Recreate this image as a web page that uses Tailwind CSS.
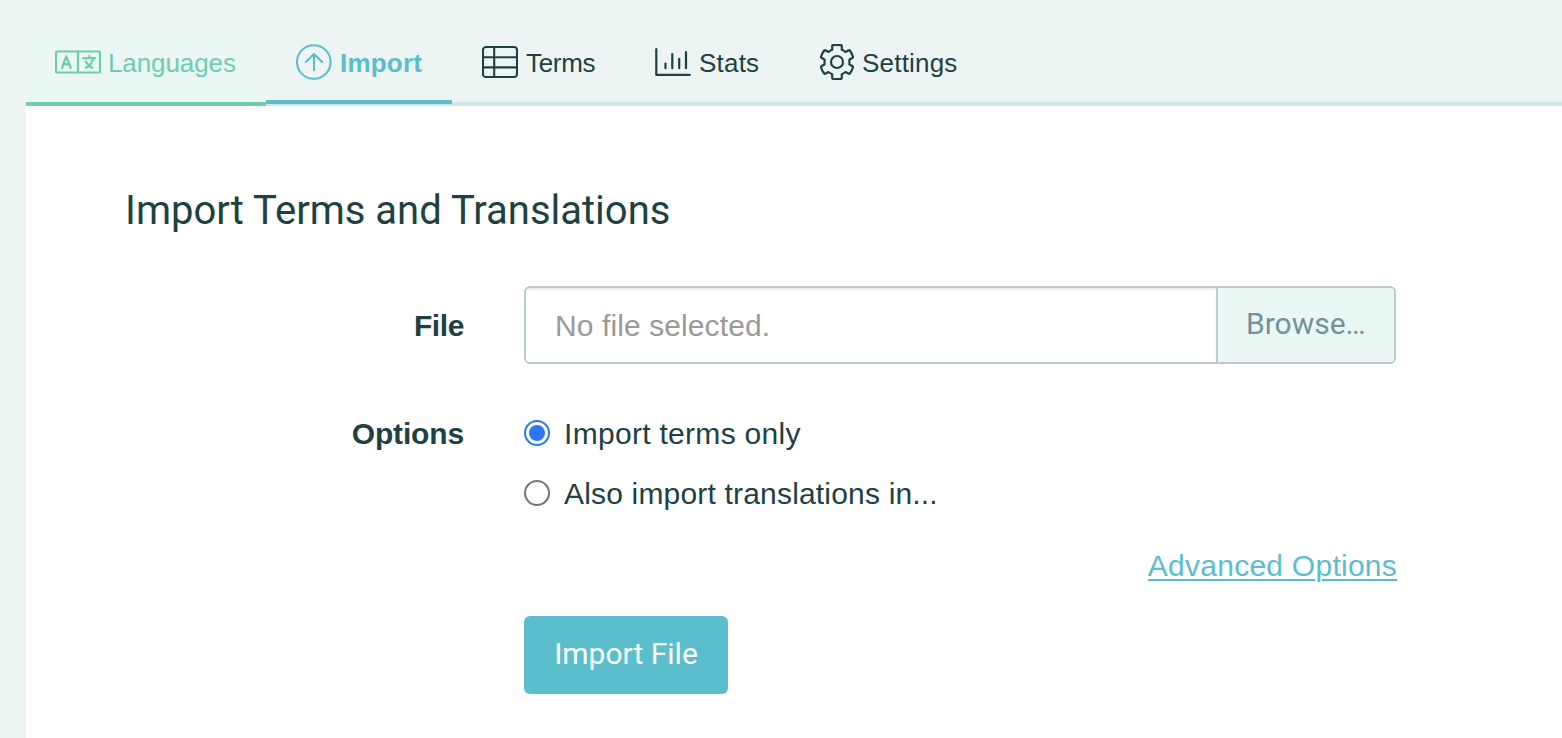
<!DOCTYPE html>
<html lang="en">
<head>
<meta charset="utf-8">
<title>Import Terms and Translations</title>
<script src="https://cdn.jsdelivr.net/npm/@tailwindcss/browser@4"></script>
</head>
<body class="h-[738px] w-[1562px] overflow-hidden bg-[#ecf5f4] pl-[26px] font-['Liberation_Sans',Arial,sans-serif] text-[30px] leading-[40px] text-[#1e4141]">
<nav class="flex h-[106px] border-b-4 border-[#d5e5e6] text-[26px] leading-[30px]">
  <a class="mt-[20px] flex h-[86px] w-[240px] shrink-0 items-center border-b-4 border-[#6dceae] bg-[#ebf7f5] pl-[29px] pt-[4px] text-[#6dceae]">
    <svg class="-mt-0.5 mr-[7px] h-[24px] w-[46px] shrink-0" viewBox="0 0 46 24" fill="none" stroke="currentColor" stroke-width="2.2" stroke-linecap="round" stroke-linejoin="round">
      <rect x="1" y="1.5" width="44" height="21" rx="0.8"/>
      <path d="M23 1.5v21M7 18 11.3 6.3 15.7 18M8.4 14.2h5.8M28.3 8.2h12M34.2 5.8v2.4M38 9c-.9 3.5-3.5 7.2-7 8.8M30.8 11.6c1.4 2.8 3.6 5 6.4 6.2"/>
    </svg>
    <span class="tracking-[-0.1px]">Languages</span>
  </a>
  <a class="flex h-[104px] w-[186px] shrink-0 items-center border-b-4 border-[#5abecd] pl-[30px] pt-[26px] font-bold text-[#5abecd]">
    <svg class="-mt-0.5 mr-[8px] h-[36px] w-[36px] shrink-0" viewBox="0 0 36 36" fill="none" stroke="currentColor" stroke-width="2.1" stroke-linecap="round" stroke-linejoin="round">
      <circle cx="17.8" cy="18" r="16.8"/>
      <path d="M18 26.2V10M9.8 18l8.2-8 8.2 8"/>
    </svg>
    <span class="tracking-[0.2px]">Import</span>
  </a>
  <a class="flex h-[104px] w-[173px] shrink-0 items-center pl-[30px] pt-[22px]">
    <svg class="-mt-0.5 mr-[8px] h-[32px] w-[36px] shrink-0" viewBox="0 0 36 32" fill="none" stroke="currentColor" stroke-width="2.1">
      <rect x="1" y="1" width="34" height="30" rx="3"/>
      <path d="M1 11.2h34M1 21.4h34M12.2 1v30"/>
    </svg>
    <span class="tracking-[-0.3px]">Terms</span>
  </a>
  <a class="flex h-[104px] w-[165px] shrink-0 items-center pl-[30px] pt-[22px]">
    <svg class="-mt-0.5 mr-[8px] h-[28px] w-[36px] shrink-0" viewBox="0 0 36 28" fill="none" stroke="currentColor" stroke-width="2.2" stroke-linecap="round" stroke-linejoin="round">
      <path d="M1.3 1.2v25.6h33.5M10.5 15.5v4.7M17.3 6v14.2M24.2 10.8v9.4M31 4v16.2"/>
    </svg>
    <span class="tracking-[0.2px]">Stats</span>
  </a>
  <a class="flex h-[104px] shrink-0 items-center pl-[30px] pt-[22px]">
    <svg class="-mt-0.5 mr-[8px] h-[36px] w-[34px] shrink-0" viewBox="0 0 34 36" fill="none" stroke="currentColor" stroke-width="2.2" stroke-linejoin="round">
      <circle cx="17" cy="18" r="6"/>
      <path d="M13 1.2Q17 .8 21 1.2Q21.7 1.3 21.8 2V5.8Q23.8 6.6 25.5 8L28.8 6.2Q29.4 5.9 29.8 6.5Q32 9.4 33 12.8Q33.1 13.5 32.5 13.8L29.3 15.7Q29.7 18 29.3 20.3L32.5 22.2Q33.1 22.5 33 23.2Q32 26.6 29.8 29.5Q29.4 30.1 28.8 29.8L25.5 28Q23.8 29.4 21.8 30.2V34Q21.7 34.7 21 34.8Q17 35.2 13 34.8Q12.3 34.7 12.2 34V30.2Q10.2 29.4 8.5 28L5.2 29.8Q4.6 30.1 4.2 29.5Q2 26.6 1 23.2Q.9 22.5 1.5 22.2L4.7 20.3Q4.3 18 4.7 15.7L1.5 13.8Q.9 13.5 1 12.8Q2 9.4 4.2 6.5Q4.6 5.9 5.2 6.2L8.5 8Q10.2 6.6 12.2 5.8V2Q12.3 1.3 13 1.2Z"/>
    </svg>
    <span class="tracking-[0.2px]">Settings</span>
  </a>
</nav>
<main class="h-[632px] bg-white pl-[98px] pt-[80px]">
  <h1 class="ml-px h-[100px] font-[Roboto,sans-serif] text-[40px] leading-[50px]">Import Terms and Translations</h1>
  <form>
    <div class="flex h-[78px] items-center">
      <span class="w-[340px] pt-[2px] text-right font-bold tracking-[-0.4px]">File</span>
      <div class="ml-[60px] flex h-[78px] w-[872px] overflow-hidden rounded-md border-2 border-[#bacecd]">
        <span class="flex flex-1 items-center pl-[29px] pt-[2px] tracking-[0.1px] text-[#999999] shadow-[inset_0_2px_2px_rgba(0,0,0,0.075)]">No file selected.</span>
        <span class="w-[178px] border-l-2 border-[#bacecd] bg-[#ebf7f5] pl-[28px] pt-[16px] font-[Roboto,sans-serif] text-[#6f949c]">Browse…</span>
      </div>
    </div>
    <div class="mt-[50px] flex">
      <span class="w-[340px] text-right font-bold tracking-[-0.15px]">Options</span>
      <div class="ml-[60px] flex w-[872px] flex-col gap-5">
        <label class="flex items-center tracking-[0.3px]"><span class="-mt-0.5 mr-[14px] flex h-[26px] w-[26px] items-center justify-center rounded-full border-2 border-[#2c75f6]"><i class="h-4 w-4 rounded-full bg-[#2c75f6]"></i></span>Import terms only</label>
        <label class="flex items-center tracking-[0.18px]"><span class="-mt-0.5 mr-[14px] h-[26px] w-[26px] rounded-full border-2 border-[#767676]"></span>Also import translations in...</label>
      </div>
    </div>
    <div class="ml-[400px] mt-[32px] w-[873px] text-right"><a class="tracking-[0.25px] text-[#5abecd] underline decoration-2 underline-offset-[3px]">Advanced Options</a></div>
    <button type="button" class="ml-[400px] mt-[30px] block h-[78px] w-[204px] rounded-md bg-[#5abecd] pb-[2px] font-[Roboto,sans-serif] text-white">Import File</button>
  </form>
</main>
</body>
</html>
